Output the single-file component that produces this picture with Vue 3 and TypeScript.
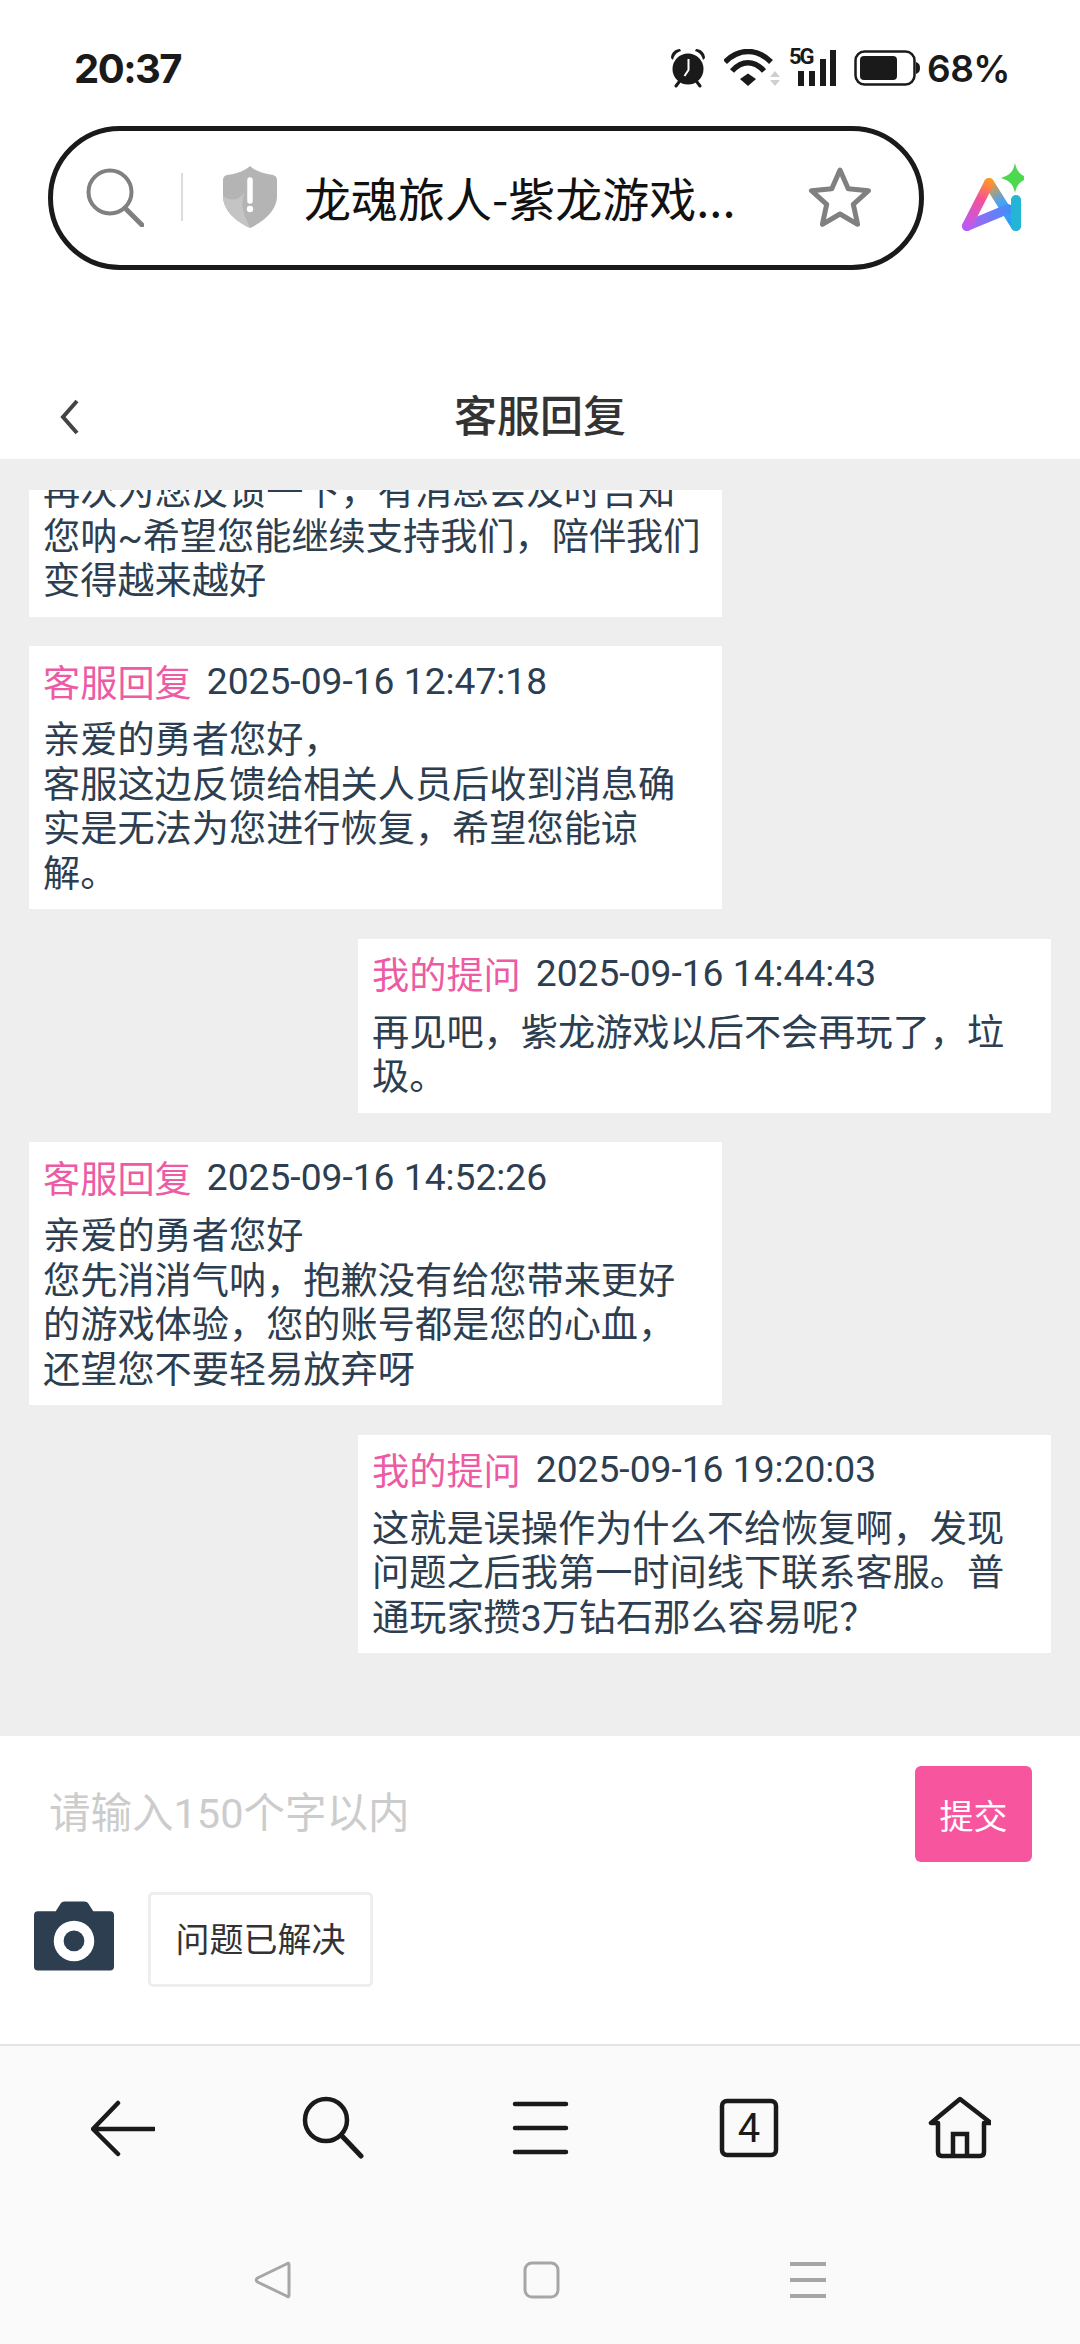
<template>
  <div class="phone">
    <div class="status">
      <span class="clock">20:37</span>
      <div class="status-icons">
        <svg class="ic-alarm" width="36" height="40" viewBox="0 0 36 40">
          <circle cx="18" cy="21" r="15.5" fill="#1a1a1a" />
          <path d="M1 10 C1 5 5 1 10 1 L11 3 C7 4 4 7 3 12 Z" fill="#1a1a1a" />
          <path d="M35 10 C35 5 31 1 26 1 L25 3 C29 4 32 7 33 12 Z" fill="#1a1a1a" />
          <path d="M9 34 L6 38 M27 34 L30 38" stroke="#1a1a1a" stroke-width="3" stroke-linecap="round" />
          <path d="M18.5 11 V22 L14.5 28" fill="none" stroke="#fff" stroke-width="2" />
        </svg>
        <svg class="ic-wifi" width="56" height="38" viewBox="0 0 56 38">
          <path d="M1 13 C15 -1 33 -1 47 13" fill="none" stroke="#1a1a1a" stroke-width="5.5" />
          <path d="M8 22 C18 11 30 11 40 22" fill="none" stroke="#1a1a1a" stroke-width="5.5" />
          <path d="M16 30 L24 24.5 L32 30 L24 37 Z" fill="#1a1a1a" />
          <path d="M51 22 L56 28 H46 Z M46 31 H56 L51 37 Z" fill="#cfcfcf" />
        </svg>
        <div class="signal">
          <span class="five-g">5G</span>
          <svg width="48" height="38" viewBox="0 0 48 38">
            <path d="M10 22 h6 v15 h-6 Z M21 22 h6 v15 h-6 Z M32 10 h6 v27 h-6 Z M42 1 h6 v36 h-6 Z" fill="#1a1a1a" />
          </svg>
        </div>
        <svg class="ic-battery" width="66" height="36" viewBox="0 0 66 36">
          <rect x="1.5" y="1.5" width="59" height="33" rx="9" fill="none" stroke="#1a1a1a" stroke-width="2.5" />
          <rect x="6" y="6" width="37" height="24" rx="4" fill="#1a1a1a" />
          <path d="M62 12 C65 13 66 15 66 18 C66 21 65 23 62 24 Z" fill="#1a1a1a" />
        </svg>
        <span class="percent">68%</span>
      </div>
    </div>

    <div class="url-row">
      <div class="url-bar">
        <svg class="ic-search" width="58" height="60" viewBox="0 0 58 60">
          <circle cx="24" cy="25" r="21.5" fill="none" stroke="#808080" stroke-width="4" />
          <path d="M39 41 L56 58" stroke="#808080" stroke-width="5" stroke-linecap="round" />
        </svg>
        <span class="divider"></span>
        <svg class="ic-shield" width="54" height="62" viewBox="0 0 54 62">
          <path d="M27 0 C31 4 40 8 50 9 Q54 10 54 14 V30 C54 45 40 56 27 62 C14 56 0 45 0 30 V14 Q0 10 4 9 C14 8 23 4 27 0 Z" fill="#b4b4b4" />
          <path d="M27 62 C14 56 0 45 0 30 C8 36 16 34 22 26 C16 40 22 50 27 62 Z" fill="#c4c4c4" />
          <path d="M27 14 V35" stroke="#fff" stroke-width="5.5" stroke-linecap="round" />
          <circle cx="27" cy="43" r="3.2" fill="#fff" />
        </svg>
        <span class="page-title">龙魂旅人-紫龙游戏...</span>
        <svg class="ic-star" width="64" height="62" viewBox="0 0 64 62">
          <path d="M32 4 L40.2 22.7 L60.5 24.7 L45.3 38.3 L49.6 58.3 L32 48 L14.4 58.3 L18.7 38.3 L3.5 24.7 L23.8 22.7 Z" fill="none" stroke="#808080" stroke-width="5" stroke-linejoin="round" />
        </svg>
      </div>
      <svg class="ic-ai" width="64" height="76" viewBox="0 0 64 76">
        <defs>
          <linearGradient id="aiLeft" gradientUnits="userSpaceOnUse" x1="30" y1="20" x2="6" y2="68">
            <stop offset="0" stop-color="#ff9a1f" />
            <stop offset="0.4" stop-color="#f5509a" />
            <stop offset="1" stop-color="#b65cf5" />
          </linearGradient>
          <linearGradient id="aiCross" gradientUnits="userSpaceOnUse" x1="6" y1="68" x2="50" y2="48">
            <stop offset="0" stop-color="#b65cf5" />
            <stop offset="1" stop-color="#3f8ff8" />
          </linearGradient>
          <linearGradient id="aiRight" gradientUnits="userSpaceOnUse" x1="30" y1="20" x2="56" y2="68">
            <stop offset="0" stop-color="#ff9a1f" />
            <stop offset="0.45" stop-color="#4aa3f0" />
            <stop offset="1" stop-color="#1e9cf5" />
          </linearGradient>
        </defs>
        <path d="M29 23 L56 66" fill="none" stroke="url(#aiRight)" stroke-width="10" stroke-linecap="round" />
        <path d="M7 66 L48 49" fill="none" stroke="url(#aiCross)" stroke-width="10" stroke-linecap="round" />
        <path d="M29 23 L7 66" fill="none" stroke="url(#aiLeft)" stroke-width="10" stroke-linecap="round" />
        <path d="M56 40 V66" stroke="#22b5d6" stroke-width="10" stroke-linecap="round" />
        <path d="M55 3 C57 12 60 15 69 18 C60 21 57 24 55 33 C53 24 50 21 41 18 C50 15 53 12 55 3 Z" fill="#4cd94f" />
      </svg>
    </div>

    <header class="page-head">
      <svg class="ic-chevron" width="20" height="36" viewBox="0 0 20 36">
        <path d="M17 2 L3 18 L17 34" fill="none" stroke="#444" stroke-width="4" />
      </svg>
      <h1>客服回复</h1>
    </header>

    <main class="chat">
      <div class="list">
        <div class="card clipped">
          <p class="body">再次为您反馈一下，有消息会及时告知您呐~希望您能继续支持我们，陪伴我们变得越来越好</p>
        </div>
        <div v-for="m in messages" :key="m.time" class="card" :class="{ mine: m.mine }">
          <div class="meta">
            <span class="who">{{ m.mine ? '我的提问' : '客服回复' }}</span>
            <span class="time">{{ m.time }}</span>
          </div>
          <p class="body">{{ m.text }}</p>
        </div>
      </div>
    </main>

    <section class="composer">
      <div class="input-row">
        <input class="input" type="text" placeholder="请输入150个字以内" />
        <button class="submit" type="button">提交</button>
      </div>
      <div class="tools">
        <svg class="ic-camera" width="80" height="70" viewBox="0 0 81 70">
          <path d="M4 10 H22 L27 2 Q28 0 31 0 H51 Q54 0 55 2 L60 10 H77 Q81 10 81 14 V66 Q81 70 77 70 H4 Q0 70 0 66 V14 Q0 10 4 10 Z" fill="#2c3e50" />
          <circle cx="40.5" cy="40" r="20.5" fill="#fff" />
          <circle cx="40.5" cy="40" r="10.5" fill="#2c3e50" />
        </svg>
        <button class="resolved" type="button">问题已解决</button>
      </div>
    </section>

    <footer class="bottom">
      <nav class="toolbar">
        <svg width="64" height="64" viewBox="0 0 64 64">
          <path d="M27 7 L2 33 L27 58 M3 33 H63" fill="none" stroke="#1a1a1a" stroke-width="4.5" stroke-linecap="round" stroke-linejoin="round" />
        </svg>
        <svg width="64" height="64" viewBox="0 0 64 64">
          <circle cx="26" cy="24" r="21" fill="none" stroke="#1a1a1a" stroke-width="4.5" />
          <path d="M42 40 L61 60" stroke="#1a1a1a" stroke-width="5" stroke-linecap="round" />
        </svg>
        <svg width="64" height="64" viewBox="0 0 64 64">
          <path d="M6 8 H57 M6 32 H57 M6 56 H57" stroke="#1a1a1a" stroke-width="4.5" stroke-linecap="round" />
        </svg>
        <svg width="64" height="64" viewBox="0 0 64 64">
          <rect x="4" y="5" width="54" height="54" rx="5" fill="none" stroke="#1a1a1a" stroke-width="4.5" />
          <text x="31" y="46" text-anchor="middle" class="tab-count">4</text>
        </svg>
        <svg width="64" height="64" viewBox="-2 0 64 64">
          <path d="M31 3 L2 27 H9 V56 Q9 60 13 60 H51 Q55 60 55 56 V27 H62 Z" fill="none" stroke="#1a1a1a" stroke-width="4.5" stroke-linejoin="round" />
          <path d="M24 60 V38 H38 V60" fill="none" stroke="#1a1a1a" stroke-width="4.5" />
        </svg>
      </nav>
      <nav class="system-nav">
        <svg width="40" height="40" viewBox="0 0 40 40">
          <path d="M35 5 Q35 2 32.5 4 L3.5 18 Q1 20 3.5 22 L32.5 36 Q35 38 35 35 Z" fill="none" stroke="#a6a6a6" stroke-width="3" stroke-linejoin="round" />
        </svg>
        <svg width="40" height="40" viewBox="0 0 40 40">
          <rect x="4" y="3" width="33" height="34" rx="7" fill="none" stroke="#a6a6a6" stroke-width="3" />
        </svg>
        <svg width="40" height="40" viewBox="0 0 40 40">
          <path d="M2 4 H38 M2 20 H38 M2 36 H38" stroke="#a6a6a6" stroke-width="4" />
        </svg>
      </nav>
    </footer>
  </div>
</template>

<script setup lang="ts">
interface Message {
  mine: boolean
  time: string
  text: string
}

const messages: Message[] = [
  {
    mine: false,
    time: '2025-09-16 12:47:18',
    text: '亲爱的勇者您好，\n客服这边反馈给相关人员后收到消息确实是无法为您进行恢复，希望您能谅解。',
  },
  {
    mine: true,
    time: '2025-09-16 14:44:43',
    text: '再见吧，紫龙游戏以后不会再玩了，垃圾。',
  },
  {
    mine: false,
    time: '2025-09-16 14:52:26',
    text: '亲爱的勇者您好\n您先消消气呐，抱歉没有给您带来更好的游戏体验，您的账号都是您的心血，还望您不要轻易放弃呀',
  },
  {
    mine: true,
    time: '2025-09-16 19:20:03',
    text: '这就是误操作为什么不给恢复啊，发现问题之后我第一时间线下联系客服。普通玩家攒3万钻石那么容易呢？',
  },
]
</script>

<style scoped>
.phone {
  width: 1080px;
  height: 2344px;
  display: flex;
  flex-direction: column;
  overflow: hidden;
  background: #fff;
  font-family: Roboto, 'Noto Sans CJK SC', sans-serif;
}

.status {
  height: 46px;
  margin-top: 45px;
  margin-bottom: 35px;
  padding: 0 70px 0 74px;
  display: flex;
  align-items: center;
  justify-content: space-between;
  flex-shrink: 0;
}

.clock {
  font-family: Inter, sans-serif;
  font-size: 40px;
  font-weight: 700;
  letter-spacing: -1.5px;
  color: #1a1a1a;
}

.status-icons {
  display: flex;
  align-items: center;
}

.ic-alarm {
  margin-right: 18px;
}

.ic-wifi {
  margin-right: 8px;
}

.signal {
  position: relative;
  width: 48px;
  height: 38px;
  margin-right: 18px;
}

.five-g {
  position: absolute;
  left: 1px;
  top: -4px;
  font-size: 22px;
  line-height: 24px;
  font-weight: 700;
  letter-spacing: -2px;
  color: #1a1a1a;
}

.ic-battery {
  margin-right: 7px;
}

.percent {
  font-family: Inter, sans-serif;
  font-size: 37px;
  font-weight: 600;
  letter-spacing: -0.5px;
  color: #1a1a1a;
}

.url-row {
  height: 144px;
  margin-bottom: 100px;
  padding-left: 48px;
  display: flex;
  align-items: center;
  flex-shrink: 0;
}

.url-bar {
  width: 876px;
  height: 144px;
  box-sizing: border-box;
  border: 5px solid #1a1a1a;
  border-radius: 72px;
  padding: 0 0 3px 33px;
  display: flex;
  align-items: center;
}

.ic-search {
  flex-shrink: 0;
}

.divider {
  width: 2px;
  height: 48px;
  margin: 0 40px 0 37px;
  background: #dcdcdc;
}

.ic-shield {
  flex-shrink: 0;
}

.page-title {
  margin-left: 27px;
  width: 504px;
  flex-shrink: 0;
  font-size: 47px;
  line-height: 60px;
  color: #111;
  white-space: nowrap;
  font-family: 'Noto Sans CJK SC', sans-serif;
}

.ic-ai {
  margin-left: 36px;
  flex-shrink: 0;
  overflow: hidden;
}

.page-head {
  height: 89px;
  padding-bottom: 3px;
  box-sizing: border-box;
  flex-shrink: 0;
  position: relative;
  display: flex;
  align-items: center;
  justify-content: center;
}

.ic-chevron {
  position: absolute;
  left: 60px;
  top: 29px;
}

.page-head h1 {
  margin: 0;
  font-size: 43px;
  font-weight: 500;
  color: #333;
  font-family: 'Noto Sans CJK SC', sans-serif;
}

.chat {
  flex: 1;
  min-height: 0;
  padding-top: 31px;
  background: #eee;
  display: flex;
}

.list {
  flex: 1;
  padding: 0 29px;
  display: flex;
  flex-direction: column;
  gap: 29.5px;
  overflow: hidden;
}

.card {
  width: 693px;
  box-sizing: border-box;
  padding: 15px 15px 13px 14px;
  background: #fff;
  align-self: flex-start;
  flex-shrink: 0;
}

.card.mine {
  align-self: flex-end;
}

.card.clipped {
  margin-top: -20px;
  padding-top: 0;
}

.meta {
  height: 39px;
  margin-bottom: 18px;
  display: flex;
  align-items: center;
  gap: 15px;
  font-size: 37.2px;
}

.who {
  color: #ec5ba3;
  font-family: 'Noto Sans CJK SC', sans-serif;
}

.time {
  color: #2c3e50;
}

.body {
  margin: 0;
  font-size: 37.2px;
  line-height: 44.5px;
  color: #2c3e50;
  white-space: pre-line;
  font-family: Roboto, 'Noto Sans CJK SC', sans-serif;
}

.composer {
  height: 308px;
  flex-shrink: 0;
  box-sizing: border-box;
  padding-top: 30px;
  background: #fff;
}

.input-row {
  height: 96px;
  padding: 0 48px 0 49px;
  display: flex;
  align-items: center;
  justify-content: space-between;
}

.input {
  flex: 1;
  min-width: 0;
  border: 0;
  outline: 0;
  padding: 0 0 2px;
  font-family: Roboto, 'Noto Sans CJK SC', sans-serif;
  font-size: 41.5px;
  background: transparent;
}

.input::placeholder {
  color: #ccc;
  opacity: 1;
}

.submit {
  width: 117px;
  height: 96px;
  border: 0;
  border-radius: 6px;
  padding: 0;
  background: #f7569f;
  color: #fff;
  font-family: 'Noto Sans CJK SC', sans-serif;
  font-size: 34px;
}

.tools {
  margin-top: 30px;
  padding-left: 34px;
  display: flex;
  align-items: flex-start;
  gap: 34px;
}

.ic-camera {
  margin-top: 9px;
}

.resolved {
  width: 225px;
  height: 95px;
  box-sizing: border-box;
  border: 3px solid #eceef0;
  border-radius: 5px;
  padding: 0 0 4px;
  background: #fff;
  color: #333;
  font-family: 'Noto Sans CJK SC', sans-serif;
  font-size: 34px;
}

.bottom {
  height: 300px;
  flex-shrink: 0;
  box-sizing: border-box;
  border-top: 2px solid #e3e3e3;
  background: #fafafa;
}

.toolbar {
  height: 64px;
  margin-top: 50px;
  padding: 0 18px;
  display: grid;
  grid-template-columns: repeat(5, 209px);
  justify-items: center;
}

.tab-count {
  font-family: Roboto, sans-serif;
  font-size: 40px;
  fill: #1a1a1a;
}

.system-nav {
  margin-top: 100px;
  padding-left: 2px;
  display: flex;
  justify-content: center;
  gap: 227px;
}
</style>

<style>
html,
body {
  margin: 0;
  background: #fff;
}
</style>
